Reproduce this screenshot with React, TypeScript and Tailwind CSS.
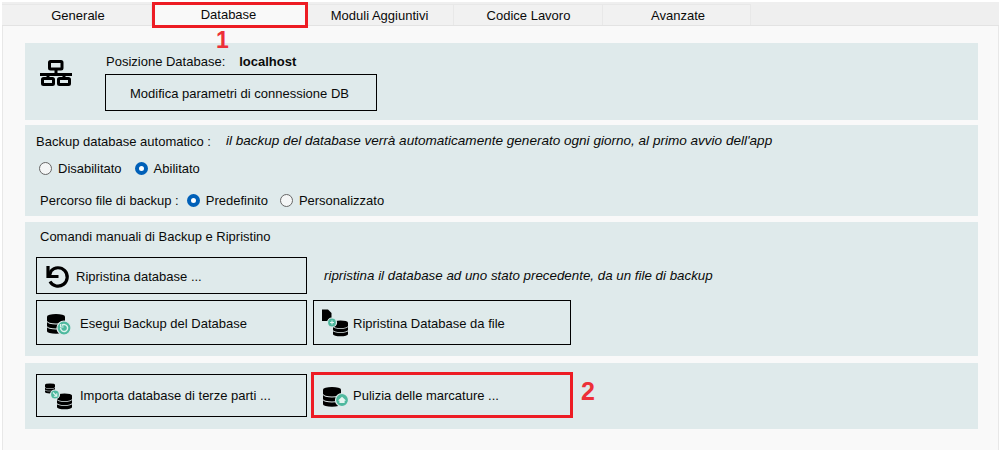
import React from 'react';

const TABS = [
    { label: 'Generale', width: 'w-[150px] pl-[3px]' },
    { label: 'Database', width: 'w-[154px]' },
    { label: 'Moduli Aggiuntivi', width: 'w-[148px]' },
    { label: 'Codice Lavoro', width: 'w-[149px] pl-[1px]' },
    { label: 'Avanzate', width: 'w-[148px] pl-[3px]' },
];

function Radio({ checked, label }: { checked?: boolean; label: string }) {
    return (
        <label className="flex items-center gap-[6px]">
            {checked ? (
                <span className="w-[13px] h-[13px] rounded-full border-[4px] border-[#0060b8] bg-white" />
            ) : (
                <span className="w-[13px] h-[13px] rounded-full border border-[#666666] bg-[#f4f6f6]" />
            )}
            {label}
        </label>
    );
}

function NetworkIcon() {
    return (
        <svg width="32" height="26" viewBox="0 0 32 26" fill="none" stroke="#000" strokeWidth="3">
            <rect x="9.5" y="1.5" width="12.5" height="7.5" rx="1" />
            <path d="M16 10v4M0 14.5h32M8 15v3M24 15v3" />
            <rect x="2.5" y="18.5" width="11" height="6" rx="1" />
            <rect x="18.5" y="18.5" width="11" height="6" rx="1" />
        </svg>
    );
}

function UndoIcon() {
    return (
        <svg className="mt-[3px]" width="24" height="24" viewBox="0 0 24 24" fill="none" stroke="#000" strokeWidth="3.2">
            <path d="M3.5 10.5L5 6A9.2 9.2 0 1 1 4 16.5" />
            <path d="M2 1v10.5h10.5" />
        </svg>
    );
}

// stack of three curved disks, the db symbol in all the buttons
function Disks({ x, y, w, h }: { x: number; y: number; w: number; h: number }) {
    const rx = w / 2;
    const ry = h * 0.13;
    const bh = h * 0.21;
    const gap = h * 0.05;
    const top = `M${x} ${y + ry}A${rx} ${ry} 0 0 1 ${x + w} ${y + ry}V${y + ry + bh}A${rx} ${ry} 0 0 1 ${x} ${y + ry + bh}Z`;
    const band = (yi: number) =>
        `M${x} ${yi}A${rx} ${ry} 0 0 0 ${x + w} ${yi}V${yi + bh}A${rx} ${ry} 0 0 1 ${x} ${yi + bh}Z`;
    return (
        <g fill="#000">
            <path d={top} />
            <path d={band(y + ry + bh + gap)} />
            <path d={band(y + ry + 2 * bh + 2 * gap)} />
        </g>
    );
}

function Badge({ cx, cy, r }: { cx: number; cy: number; r: number }) {
    return <circle cx={cx} cy={cy} r={r} fill="#4fb99f" stroke="#dfeaeb" strokeWidth="1.2" />;
}

function BackupIcon() {
    return (
        <svg width="26" height="24" viewBox="0 0 26 24">
            <Disks x={1} y={3} w={18} h={20} />
            <Badge cx={18} cy={17} r={7} />
            <path d="M14.6 17a3.5 3.5 0 1 0 1.2-2.6" fill="none" stroke="#dff4ee" strokeWidth="1.4" />
            <path d="M14.6 13v3h3" fill="none" stroke="#dff4ee" strokeWidth="1.2" />
        </svg>
    );
}

function RestoreFileIcon() {
    return (
        <svg width="27" height="28" viewBox="0 0 27 28">
            <path d="M0 .5h6l3.5 3.5v8H0z" fill="#000" />
            <Disks x={11} y={11.5} w={15} h={16} />
            <Badge cx={10} cy={13.5} r={4.5} />
            <path d="M8 13.5h4M10 11.5v4" stroke="#dff4ee" strokeWidth="1.1" />
        </svg>
    );
}

function ImportIcon() {
    return (
        <svg width="28" height="28" viewBox="0 0 28 28">
            <Disks x={0} y={1.5} w={10} h={10} />
            <Disks x={12} y={11.5} w={15} h={16} />
            <Badge cx={10} cy={12.5} r={4.5} />
            <path d="M8 10.5l3.5 3.5M11.8 11.2v3h-3" fill="none" stroke="#dff4ee" strokeWidth="1.1" />
        </svg>
    );
}

function CleanIcon() {
    return (
        <svg width="26" height="24" viewBox="0 0 26 24">
            <Disks x={0} y={4} w={18} h={20} />
            <Badge cx={19} cy={17} r={6.5} />
            <path d="M15 17.5l4-3.8 4 3.8-1.4.2v2.3h-5.2v-2.3z" fill="#e4f5f0" />
        </svg>
    );
}

export default function App() {
    return (
        <div className="w-[1001px] h-[450px] overflow-hidden bg-white pt-[2px] pl-[2px] text-[13px] leading-none text-[#0a0a0a] font-['Liberation_Sans',Arial,sans-serif]">
            <div className="relative w-[997px] h-[448px] flex flex-col bg-[#f9f9f9]">
                <div className="flex h-[24px] pt-[2px] bg-[#efefef] border-b border-[#e3e3e3]">
                    {TABS.map((t) => (
                        <div
                            key={t.label}
                            className={`${t.width} flex items-center justify-center border-r border-t border-[#e8e8e8] ${t.label === 'Database' ? 'bg-[#f9f9f9] pb-[2px]' : 'bg-[#f1f1f1]'}`}
                        >
                            {t.label}
                        </div>
                    ))}
                </div>

                <div className="flex-1 border-r border-l border-[#e8e8e8] pl-[22px] pr-[20px] pt-[17px] flex flex-col">
                    <div className="h-[77px] bg-[#dfeaeb] flex">
                        <div className="w-[80px] pl-[15px] pt-[17px]">
                            <NetworkIcon />
                        </div>
                        <div className="pt-[12px]">
                            <div className="flex h-[12px] items-center ml-[1px]">
                                <span>Posizione Database:</span>
                                <span className="ml-[14px] font-bold">localhost</span>
                            </div>
                            <button className="mt-[7px] pt-[1px] pr-[3px] w-[272px] h-[37px] border border-black text-center">
                                Modifica parametri di connessione DB
                            </button>
                        </div>
                    </div>

                    <div className="mt-[5px] h-[91px] bg-[#dfeaeb] pl-[11px] pt-[10px]">
                        <div className="flex h-[12px] items-center">
                            <span>Backup database automatico :</span>
                            <span className="ml-[15px] italic text-[13.55px]">il backup del database verrà automaticamente generato ogni giorno, al primo avvio dell'app</span>
                        </div>
                        <div className="flex gap-[13px] mt-[14px] ml-[3px] h-[14px] items-center">
                            <Radio label="Disabilitato" />
                            <Radio checked label="Abilitato" />
                        </div>
                        <div className="flex mt-[18px] ml-[4px] h-[14px] items-center">
                            <span className="mr-[8px]">Percorso file di backup :</span>
                            <div className="flex gap-[12px]">
                                <Radio checked label="Predefinito" />
                                <Radio label="Personalizzato" />
                            </div>
                        </div>
                    </div>

                    <div className="mt-[6px] h-[134px] bg-[#dfeaeb] pl-[11px]">
                        <div className="pt-[8px] ml-[4px] h-[35px]">Comandi manuali di Backup e Ripristino</div>
                        <div className="flex items-center">
                            <button className="w-[271px] h-[37px] border border-black flex items-center pl-[9px] gap-[6px]">
                                <UndoIcon />
                                <span className="pt-[1px]">Ripristina database ...</span>
                            </button>
                            <span className="ml-[17px] italic text-[13.35px]">ripristina il database ad uno stato precedente, da un file di backup</span>
                        </div>
                        <div className="flex mt-[6px] gap-[6px]">
                            <button className="w-[271px] h-[45px] border border-black flex items-center pl-[9px] gap-[8px]">
                                <BackupIcon />
                                <span className="pt-[1px]">Esegui Backup del Database</span>
                            </button>
                            <button className="w-[258px] h-[45px] border border-black flex items-center pl-[8px] gap-[4px]">
                                <RestoreFileIcon />
                                <span className="pt-[1px]">Ripristina Database da file</span>
                            </button>
                        </div>
                    </div>

                    <div className="mt-[7px] h-[66px] bg-[#dfeaeb] pl-[11px] pt-[9px] flex items-start gap-[4px]">
                        <button className="mt-[2px] w-[271px] h-[43px] border border-black flex items-center pl-[8px] gap-[7px]">
                            <ImportIcon />
                            <span>Importa database di terze parti ...</span>
                        </button>
                        <button className="w-[262px] h-[46px] border-[3px] border-[#ed1c24] flex items-center pl-[9px] gap-[4px]">
                            <CleanIcon />
                            Pulizia delle marcature ...
                        </button>
                        <span className="ml-[4px] mt-[7px] text-[25px] font-bold text-[#ed3038]">2</span>
                    </div>
                </div>

                {/* annotation over the Database tab */}
                <div className="absolute left-[150px] top-0 w-[156px] h-[26px] border-[3px] border-[#ed1c24]" />
                <span className="absolute left-[214px] top-[27px] text-[23px] font-bold text-[#ed3038]">1</span>
            </div>
        </div>
    );
}
